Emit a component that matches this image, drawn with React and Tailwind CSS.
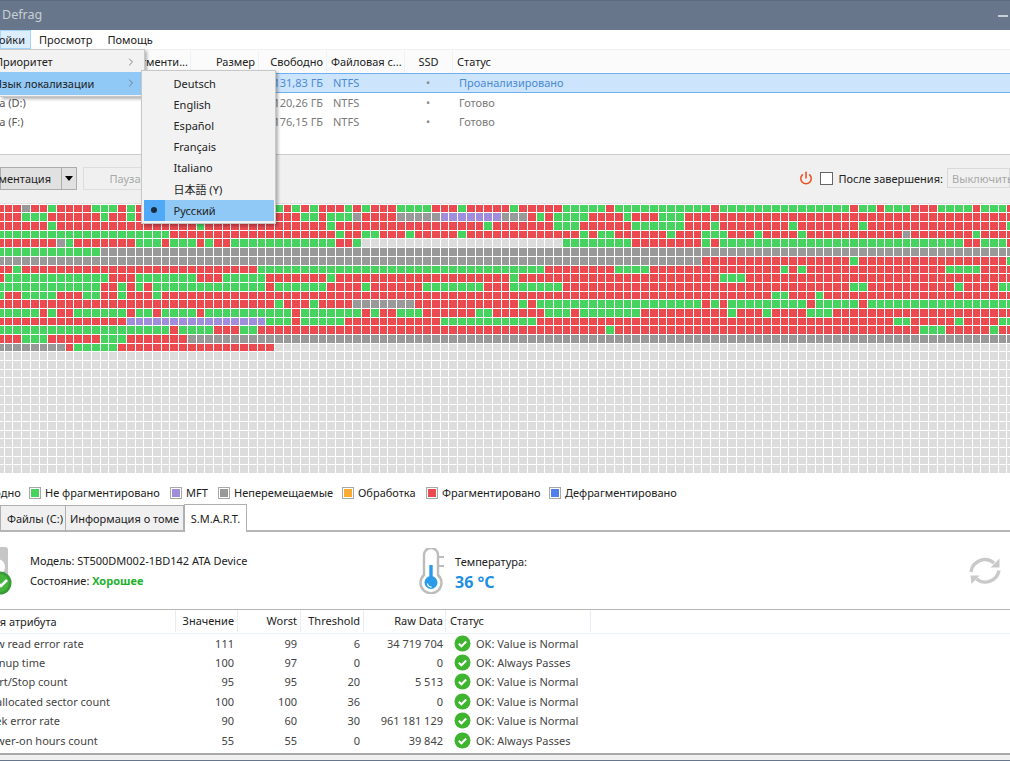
import { ChevronRight, Power } from 'lucide-react';

// each token is a colour letter + the last column it runs to
const blockRows = [
  'R2 A3 R5 G6 R10 G13 R14 G15 R31 G32 R33 G34 R35 G36 R39 G40 R41 G42 R45 G49 R52 G53 R58 G59 R64 G69 R70 G81 R82 G97 R98 G100 R101 G104 R107 G111 R112 G115 R116',
  'R2 G5 R11 G12 R14 G15 R34 G36 R37 G40 A41 R45 A50 P57 A60 R61 G62 R63 G67 R71 G72 R75 G78 R116',
  'R5 G6 R22 G23 R37 G38 R55 G56 R63 G66 R72 G78 R81 G82 R90 G91 R98 G99 R115 G116',
  'G19 R38 G39 R41 G43 R46 G47 R52 G53 R66 G67 R68 G70 R76 G77 R80 G83 R86 G87 R91 G92 R103 A104 R111 G112 R116',
  'R6 A7 G8 R15 G18 R19 G22 R23 G24 R26 G38 R40 G41 L64 G72 R80 G81 R82 G110 R112 G115 R116',
  'G11 A116',
  'A80 R97 G98 R115 G116',
  'R1 G2 R29 G62 R70 G74 R89 G90 R91 G92 R108 G112 R116',
  'R0 G12 R15 G22 R25 G30 R37 G38 R58 G59 R82 G85 R116',
  'G11 R13 G14 R15 G16 R17 G30 R31 G37 R41 G42 R48 G55 R58 G64 R97 G99 R109 G110 R114 G116',
  'G0 R2 G6 R9 G11 R13 G14 R17 G18 R88 G90 R93 G94 R116',
  'R31 G32 R35 G36 R40 A47 R59 G60 R61 G80 R81 G82 R83 G92 R93 G98 R99 G116',
  'G4 R5 G6 R8 G14 R15 G17 R18 G22 R23 G33 R34 G41 R42 G43 R45 G48 R54 G56 R62 G65 R66 G73 R83 G84 R87 G88 R92 G95 R116',
  'R14 P30 G33 R34 G39 R50 G61 R102 G104 R109 G110 R114 G116',
  'G19 R20 G24 R27 G29 R69 G70 R105 G108 R113 G114 R116',
  'R2 G5 R11 G14 R21 A116',
  'A7 R8 G13 R31 L116',
  ...Array(14).fill('L116'),
];

const blockColors = {
  R: 'bg-[#ea4a50]',
  G: 'bg-[#47d35f]',
  A: 'bg-[#999999]',
  P: 'bg-[#a08edd]',
  L: 'bg-[#dcdcdc]',
};

const expandRow = (row) => {
  const cells = [];
  row.split(' ').forEach((token) => {
    const end = Number(token.slice(1));
    while (cells.length <= end) cells.push(token[0]);
  });
  return cells;
};

const volumes = [
  { name: '', free: '131,83 ГБ', status: 'Проанализировано', selected: true },
  { name: 'Data (D:)', free: '120,26 ГБ', status: 'Готово' },
  { name: 'Data (F:)', free: '176,15 ГБ', status: 'Готово' },
];

const legend = [
  { label: 'Свободно', color: 'bg-[#dcdcdc]', width: 'w-[77px]', offset: 'ml-[-48px]' },
  { label: 'Не фрагментировано', color: 'bg-[#47d35f]', width: 'w-[141px]' },
  { label: 'MFT', color: 'bg-[#a08edd]', width: 'w-[48px]' },
  { label: 'Неперемещаемые', color: 'bg-[#999999]', width: 'w-[124px]' },
  { label: 'Обработка', color: 'bg-[#ffaa33]', width: 'w-[84px]' },
  { label: 'Фрагментировано', color: 'bg-[#ea4a50]', width: 'w-[123px]' },
  { label: 'Дефрагментировано', color: 'bg-[#4f7fe8]', width: 'w-[140px]' },
];

const attributes = [
  ['Raw read error rate', '111', '99', '6', '34 719 704', 'OK: Value is Normal'],
  ['Spinup time', '100', '97', '0', '0', 'OK: Always Passes'],
  ['Start/Stop count', '95', '95', '20', '5 513', 'OK: Value is Normal'],
  ['Reallocated sector count', '100', '100', '36', '0', 'OK: Value is Normal'],
  ['Seek error rate', '90', '60', '30', '961 181 129', 'OK: Value is Normal'],
  ['Power-on hours count', '55', '55', '0', '39 842', 'OK: Always Passes'],
];

const languages = ['Deutsch', 'English', 'Español', 'Français', 'Italiano', '日本語 (Y)'];

const CheckBadge = ({ size = 17 }) => (
  <svg width={size} height={size} viewBox="0 0 17 17" className="shrink-0">
    <circle cx="8.5" cy="8.5" r="8" fill="#3fb52f" />
    <path d="M4.8 8.8l2.6 2.5 4.8-4.8" fill="none" stroke="#fff" strokeWidth="2" />
  </svg>
);

const Thermometer = () => (
  <svg width="25" height="46" viewBox="0 0 25 46" className="shrink-0">
    <path d="M5 27V7a7 7 0 0 1 14 0v20a10.500 10.500 0 1 1-14 0z" fill="none" stroke="#bcbcbc" strokeWidth="2.400" />
    <path d="M19 9h6M19 18h6" stroke="#bcbcbc" strokeWidth="2" />
    <path d="M12 17v14" stroke="#2a9be8" strokeWidth="3.400" />
    <circle cx="12" cy="34.500" r="6.500" fill="#2a9be8" />
    <path d="M8.500 35.500a4 4 0 0 0 4 3.500" fill="none" stroke="#fff" strokeWidth="1.300" />
  </svg>
);

const RefreshIcon = () => (
  <svg width="32" height="32" viewBox="0 0 32 32" fill="none">
    <path d="M2 17A14 14 0 0 1 25 8" stroke="#c9c9c9" strokeWidth="3.400" />
    <path d="M30.500 3.500v9h-9z" fill="#c9c9c9" />
    <path d="M30 15.500A14 14 0 0 1 7.500 24" stroke="#c9c9c9" strokeWidth="3.400" />
    <path d="M1.500 20.500h9l-8 8.500z" fill="#c9c9c9" />
  </svg>
);

const DiskIcon = () => (
  <svg width="13" height="48" viewBox="0 0 13 48" className="shrink-0">
    <path d="M-14 3a3 3 0 0 1 3-3H5a3 3 0 0 1 3 3v36h-22z" fill="#c6c6c6" />
    <circle cx="-3" cy="20" r="8" fill="#fff" />
    <circle cx="0" cy="36" r="11.500" fill="#3a9a38" />
    <circle cx="0" cy="36" r="9" fill="#46b53c" />
    <path d="M-1 37l2 2 6-6" fill="none" stroke="#fff" strokeWidth="2.600" />
  </svg>
);

export default function App() {
  return (
    <div className="relative flex h-[761px] w-[1010px] flex-col overflow-hidden bg-white font-['Noto_Sans','Open_Sans',sans-serif] text-[11px] leading-none text-[#222]">
      <header className="flex h-[30px] shrink-0 items-center justify-between border-t border-[#5b6a7d] bg-[#67768a] pl-[2px] pr-[2px]">
        <span className="text-[12.500px] text-[#c8ced6]">Defrag</span>
        <span className="h-[2px] w-[10px] bg-[#c8ced6]" />
      </header>

      <nav className="flex h-[19px] shrink-0 items-center bg-white">
        <span className="flex h-full w-[31px] items-center justify-end border border-[#a8d6fb] bg-[#dcedfc] pr-[5px] whitespace-nowrap">
          Настройки
        </span>
        <span className="ml-[8px]">Просмотр</span>
        <span className="ml-[15px]">Помощь</span>
      </nav>

      <section className="h-[106px] shrink-0 border-b border-[#cccccc] bg-white">
        <div className="grid h-[24px] grid-cols-[190px_68px_68px_78px_48px_1fr] items-center border-t border-[#f0f0f0] bg-[#fbfbfb]">
          <span className="flex justify-end pr-[2px] whitespace-nowrap">Фрагменти...</span>
          <span className="border-l border-[#eef2f6] pr-[3px] text-right leading-[22px]">Размер</span>
          <span className="border-l border-[#eef2f6] pr-[3px] text-right leading-[22px]">Свободно</span>
          <span className="border-l border-[#eef2f6] pl-[4px] leading-[22px] whitespace-nowrap">Файловая с...</span>
          <span className="border-l border-[#eef2f6] text-center leading-[22px]">SSD</span>
          <span className="border-l border-[#eef2f6] pl-[4px] leading-[22px]">Статус</span>
        </div>
        {volumes.map((volume) => (
          <div
            key={volume.free}
            className={`grid h-[19.500px] grid-cols-[190px_68px_68px_78px_48px_1fr] items-center ${
              volume.selected ? 'border-y border-[#6fb1ee] bg-[#cde4fd] text-[#4a8bd0]' : 'text-[#7a7a7a]'
            }`}
          >
            <span className="ml-[-19px] whitespace-nowrap text-[#555]">{volume.name}</span>
            <span />
            <span className="pr-[3px] text-right">{volume.free}</span>
            <span className="pl-[7px]">NTFS</span>
            <span className="text-center text-[#8a8a8a]">•</span>
            <span className="pl-[7px]">{volume.status}</span>
          </div>
        ))}
      </section>

      <section className="flex h-[49px] shrink-0 items-center border-b border-[#e2e2e2] bg-[#f0f0f0] pb-[2px]">
        <div className="flex h-[23px] w-[62px] items-center justify-end border border-[#adadad] bg-[#e1e1e1] pr-[10px] whitespace-nowrap">
          Дефрагментация
        </div>
        <div className="flex h-[23px] w-[15px] items-center justify-center border-y border-r border-[#adadad] bg-[#e1e1e1]">
          <span className="h-0 w-0 border-x-[4.500px] border-t-[5px] border-x-transparent border-t-black" />
        </div>
        <div className="ml-[6px] flex h-[23px] w-[84px] items-center justify-center border border-[#dddddd] text-[#a8a8a8]">
          Пауза
        </div>
        <div className="ml-auto flex items-center">
          <Power size={14} strokeWidth={2.600} className="text-[#f0501f]" />
          <span className="ml-[7px] h-[13px] w-[13px] border border-[#666] bg-white" />
          <span className="ml-[5px] whitespace-nowrap">После завершения:</span>
          <span className="ml-[4px] flex h-[20px] w-[63px] items-center border border-[#d9d9d9] pl-[4px] text-[#a8a8a8] whitespace-nowrap">
            Выключить
          </span>
        </div>
      </section>

      <section className="h-[278px] shrink-0 overflow-hidden bg-white pt-[0.700px]">
        <div className="ml-[-4px] grid w-max grid-cols-[repeat(117,7.720px)] auto-rows-[7.700px] gap-px">
          {blockRows.map((row, r) =>
            expandRow(row).map((kind, c) => <div key={`${r}-${c}`} className={blockColors[kind]} />),
          )}
        </div>
      </section>

      <section className="flex h-[21px] shrink-0 items-center overflow-hidden">
        {legend.map((item) => (
          <div key={item.label} className={`flex shrink-0 items-center ${item.width} ${item.offset || ''}`}>
            <span className="flex h-[12px] w-[12px] shrink-0 border border-[#a8a8a8] p-px">
              <span className={`h-full w-full ${item.color}`} />
            </span>
            <span className="ml-[4px] whitespace-nowrap">{item.label}</span>
          </div>
        ))}
      </section>

      <div className="flex h-[29px] shrink-0 items-end border-b-2 border-[#b5b5b5]">
        <span className="flex h-[25px] w-[66px] items-center justify-end border border-b-0 border-[#b0b0b0] bg-[#f0f0f0] pr-[2px]">
          Файлы (C:)
        </span>
        <span className="flex h-[25px] w-[118px] items-center justify-center border-y border-r border-b-0 border-[#b0b0b0] bg-[#f0f0f0]">
          Информация о томе
        </span>
        <span className="mb-[-2px] flex h-[28px] w-[63px] items-center justify-center border-x border-t border-[#b0b0b0] bg-white">
          S.M.A.R.T.
        </span>
      </div>

      <section className="flex h-[77px] shrink-0 items-center">
        <DiskIcon />
        <div className="ml-[17px] flex w-[389px] flex-col gap-[9px]">
          <span className="leading-[11px]">Модель: ST500DM002-1BD142 ATA Device</span>
          <span className="leading-[11px]">
            Состояние: <b className="font-bold text-[#22b02c]">Хорошее</b>
          </span>
        </div>
        <Thermometer />
        <div className="mt-[4px] ml-[11px] flex flex-col gap-[7px]">
          <span className="leading-[11px]">Температура:</span>
          <span className="text-[16px] leading-[16px] font-bold text-[#1f8fe0]">36 °C</span>
        </div>
        <div className="ml-auto mr-[9px]">
          <RefreshIcon />
        </div>
      </section>

      <section className="h-[144px] shrink-0 border-t border-[#b5b5b5]">
        <div className="grid h-[23.500px] grid-cols-[175px_62px_63px_63px_82px_146px] items-center border-b border-[#eef4fa]">
          <span className="ml-[-17px] whitespace-nowrap">Имя атрибута</span>
          <span className="border-l border-[#e6eef6] pr-[3px] text-right leading-[22px]">Значение</span>
          <span className="border-l border-[#e6eef6] pr-[3px] text-right leading-[22px]">Worst</span>
          <span className="border-l border-[#e6eef6] pr-[3px] text-right leading-[22px]">Threshold</span>
          <span className="border-l border-[#e6eef6] pr-[2px] text-right leading-[22px]">Raw Data</span>
          <span className="border-x border-[#e6eef6] pl-[4px] leading-[22px]">Статус</span>
        </div>
        <div>
          {attributes.map(([name, value, worst, threshold, raw, status]) => (
            <div key={name} className="grid h-[19.400px] grid-cols-[175px_62px_63px_63px_82px_146px] items-center text-[#444]">
              <span className="ml-[-17px] whitespace-nowrap">{name}</span>
              <span className="pr-[3px] text-right">{value}</span>
              <span className="pr-[3px] text-right">{worst}</span>
              <span className="pr-[3px] text-right">{threshold}</span>
              <span className="pr-[2px] text-right">{raw}</span>
              <span className="flex items-center gap-[5px] pl-[9px] whitespace-nowrap">
                <CheckBadge />
                {status}
              </span>
            </div>
          ))}
        </div>
      </section>

      <div className="flex-1 border-t-2 border-[#a8a8a8] bg-[#f0f0f0]" />
      <div className="h-[1px] shrink-0 bg-[#67768a]" />

      <div className="absolute top-[49px] left-0 h-[48px] w-[145px] border border-l-0 border-[#c8c8c8] bg-[#f2f2f2] pt-[1px] shadow-[2px_2px_3px_rgba(0,0,0,0.3)]">
        <div className="flex h-[21px] items-center justify-between pr-[7px]">
          <span className="ml-[-5px] whitespace-nowrap">Приоритет</span>
          <ChevronRight size={12} strokeWidth={1.600} className="text-[#666]" />
        </div>
        <div className="flex h-[23px] items-center justify-between bg-[#90c8f6] pr-[7px] pb-[1px]">
          <span className="ml-[-5px] whitespace-nowrap">Язык локализации</span>
          <ChevronRight size={12} strokeWidth={1.600} className="text-[#666]" />
        </div>
      </div>

      <div className="absolute top-[70px] left-[141px] h-[154px] w-[135px] border border-[#c8c8c8] bg-[#f2f2f2] p-[1.500px] shadow-[2px_2px_3px_rgba(0,0,0,0.3)]">
        {languages.map((language) => (
          <div key={language} className="flex h-[21.200px] items-center pl-[30px] font-['Noto_Sans','Noto_Sans_CJK_JP',sans-serif]">
            {language}
          </div>
        ))}
        <div className="flex h-[21px] items-center bg-[#90c8f6]">
          <span className="flex h-full w-[21px] items-center justify-center bg-[#4fa9f7]">
            <span className="h-[6px] w-[6px] rounded-full bg-[#1c2c3c]" />
          </span>
          <span className="ml-[9px]">Русский</span>
        </div>
      </div>
    </div>
  );
}
